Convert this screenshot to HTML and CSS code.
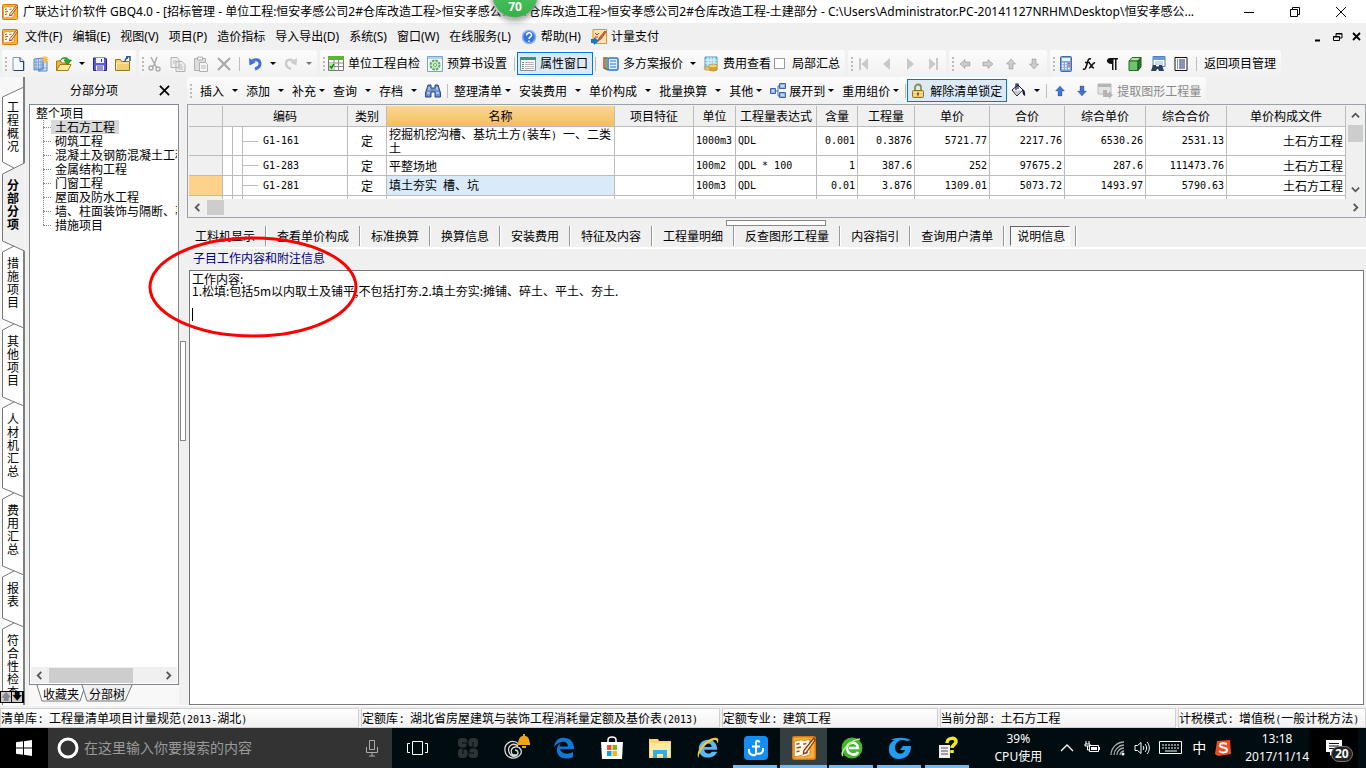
FILE: index.html
```html
<!DOCTYPE html>
<html lang="zh-CN">
<head>
<meta charset="utf-8">
<title>广联达计价软件 GBQ4.0</title>
<link rel="stylesheet" href="styles.css">
</head>
<body>
<svg class="defs" aria-hidden="true">
  <symbol id="app" viewBox="0 0 16 16"><rect x=".5" y=".5" width="15" height="15" rx="1" fill="#fbb03c" stroke="#d8780c"/><path d="M1.500 3.500l5-1 1 .7 4.500-1v10.300l-4.500 1.500-1-1-5 1z" fill="#fffdf0" stroke="#c9811c" stroke-width=".6"/><path d="M3 5.500l2-.5M3 8l3-.7M3 10.500l2-.5M7.500 5.500l2-.5M8.500 11.500l2-.5" stroke="#a8500f"/><path d="M14.500 1.500L8 9.500l-.5 2.500 2-1 6-8.500z" fill="#fff3c4" stroke="#8a2c05" stroke-width=".8"/></symbol>
  <symbol id="new" viewBox="0 0 16 16"><path d="M3 1.500h7l4 4v9H3z" fill="#f4f9ff" stroke="#8797ad"/><path d="M10 1.500v4h4M13.500 5v9.500H4" fill="none" stroke="#24436e"/></symbol>
  <symbol id="newgrid" viewBox="0 0 16 16"><path d="M1 3l9-1v11l-9 1zM10 4l4 1v10H5l5-2z" fill="#cfe0f7" stroke="#5b86c4"/><path d="M3 3v11M5.500 3v10M8 3v10M1 6h9M1 9h9M1 12h13" stroke="#6d95d1" stroke-width=".8"/><path d="M12 0v7M8.500 3.500h7M9.500 1l5 5M14.500 1l-5 5" stroke="#f3c21b" stroke-width="1.200"/></symbol>
  <symbol id="open" viewBox="0 0 16 16"><path d="M.5 14.500V5h4l1.500 2H12v7.500z" fill="#e7b93c" stroke="#ad7910"/><path d="M.5 14.500L4 8.500h11l-3 6z" fill="#ffe99a" stroke="#ad7910"/><path d="M4 5c2-5 8-4 9-1h2.500L11.500 9 8 4h2C9 2 6 2 4 5z" fill="#35a928" stroke="#167410" stroke-width=".6"/></symbol>
  <symbol id="save" viewBox="0 0 16 16"><path d="M1.500 2h12l1 1v11.500h-13z" fill="#5b5bd6" stroke="#26268c"/><path d="M4 2h8v5H4zM4 9.500h8v5H4z" fill="#f4f4ff"/><path d="M9.500 3v3M5 11h6M5 13h6" stroke="#34349a"/></symbol>
  <symbol id="folder" viewBox="0 0 16 16"><path d="M.5 14.500V3.500h5l1 2h8v9z" fill="#f2ce75" stroke="#9a7223"/><path d="M1.500 13.500V7H14" fill="none" stroke="#fff0bf"/><path d="M10 6c0-3 1-4 3-4M11 .8h4V5" fill="none" stroke="#34588e" stroke-width="1.500"/></symbol>
  <symbol id="cut" viewBox="0 0 16 16"><g fill="none" stroke="#aaa" stroke-width="1.400"><path d="M4 1l4 8 2 3M10 1L7 9l-2 2"/><circle cx="4" cy="12" r="2"/><circle cx="11" cy="13" r="2"/></g></symbol>
  <symbol id="copy" viewBox="0 0 16 16"><path d="M1 1.500h6l2 2v8H1zM6 5.500h6l3 3v7H6z" fill="#eee" stroke="#b3b3b3"/><path d="M3 5h3M3 7h2M8 9h4M8 11h5M8 13h5" stroke="#bbb"/></symbol>
  <symbol id="paste" viewBox="0 0 16 16"><path d="M1.500 2.500h11v12h-11z" fill="#ddd" stroke="#b0b0b0"/><path d="M4.500 1h5v3h-5zM6.500 6.500h6l2 2v7h-8z" fill="#f4f4f4" stroke="#b0b0b0"/><path d="M8 10h5M8 12h5" stroke="#bbb"/></symbol>
  <symbol id="del" viewBox="0 0 16 16"><path d="M2 2l12 12M14 2L2 14" stroke="#a5a5a5" stroke-width="1.800"/></symbol>
  <symbol id="undo" viewBox="0 0 16 16"><path d="M3.500 7C7 2 13 3 13 7.500c0 3-2 4.500-5 5.500" fill="none" stroke="#3f73d8" stroke-width="3"/><path d="M2 2l.5 7.500 6-3z" fill="#3f73d8"/></symbol>
  <symbol id="redo" viewBox="0 0 16 16"><path d="M12.500 7C9 2 3 3 3 7.500c0 3 2 4.500 5 5.500" fill="none" stroke="#ccc" stroke-width="2.500"/><path d="M14 2l-.5 7.500-6-3z" fill="#ccc"/></symbol>
  <symbol id="check" viewBox="0 0 16 16"><path d="M.5 1.500h15v13H.5z" fill="#fff" stroke="#777"/><path d="M0 0h16v4H0z" fill="#5cb531"/><path d="M1 7h14M1 10.500h14M6 4v10M10.500 4v10" stroke="#888"/><path d="M1 7h5v7H1z" fill="#bde9a7"/><path d="M2 10l1.500 2L6 8" fill="none" stroke="#168316" stroke-width="1.500"/></symbol>
  <symbol id="gear" viewBox="0 0 16 16"><path d="M.5.5h15v15H.5z" fill="#eef8ff" stroke="#79a5c7"/><path d="M1 1h14v2H1z" fill="#b3d2ee"/><circle cx="8" cy="9" r="4.500" fill="#cdebc5" stroke="#62a85d" stroke-width="2" stroke-dasharray="2.500 1"/><circle cx="8" cy="9" r="1.500" fill="#fff" stroke="#62a85d"/></symbol>
  <symbol id="props" viewBox="0 0 16 16"><path d="M.5 1.500h15v13H.5z" fill="#fff" stroke="#8095a0"/><path d="M0 1h16v3H0z" fill="#35967e"/><path d="M2 6.500h2M2 8.500h2M2 10.500h2M2 12.500h2" stroke="#47a18b"/><path d="M5 6.500h9M5 8.500h9M5 10.500h9M5 12.500h9" stroke="#b5b5b5"/></symbol>
  <symbol id="plans" viewBox="0 0 16 16"><path d="M3 2H1v10l2 1" fill="none" stroke="#e13a27" stroke-width="1.500"/><path d="M5 2H3v11l2 1" fill="none" stroke="#35a02c" stroke-width="1.500"/><rect x="5" y="2" width="10" height="12" rx="1.500" fill="#e4efff" stroke="#2f70d0" stroke-width="1.500"/><path d="M7 5h6M7 8h6M7 11h6" stroke="#2f70d0"/></symbol>
  <symbol id="fee" viewBox="0 0 16 16"><path d="M2 1h12v11H2z" fill="#8fd0e8" stroke="#5199b8"/><path d="M2 4h12M2 7h12M5 1v10M8 1v10M11 1v10" stroke="#e4f7fc"/><ellipse cx="10" cy="13" rx="4.500" ry="2" fill="#d4a33d" stroke="#b98a2c" stroke-width=".7"/><ellipse cx="10" cy="10" rx="4.500" ry="2" fill="#f2cf72" stroke="#b98a2c" stroke-width=".7"/><ellipse cx="4" cy="12.500" rx="3" ry="1.700" fill="#edc35b" stroke="#b98a2c" stroke-width=".6"/></symbol>
  <symbol id="first" viewBox="0 0 16 16"><path d="M3 2h2v12H3zM12 2v12L5.500 8z" fill="#c9c9c9"/></symbol>
  <symbol id="prev" viewBox="0 0 16 16"><path d="M11 2v12L4 8z" fill="#c9c9c9"/></symbol>
  <symbol id="next" viewBox="0 0 16 16"><path d="M5 2v12l7-6z" fill="#c9c9c9"/></symbol>
  <symbol id="last" viewBox="0 0 16 16"><path d="M11 2h2v12h-2zM4 2v12l6.500-6z" fill="#c9c9c9"/></symbol>
  <symbol id="arr" viewBox="0 0 16 16"><path d="M3 8l5-4.500V6h5v4H8v2.500z" fill="currentColor" stroke="#0003"/></symbol>
  <symbol id="calc" viewBox="0 0 16 16"><rect x="2.500" y=".5" width="11" height="15" rx="1" fill="#7fa4e2" stroke="#4568a6"/><path d="M4 2h8v3H4z" fill="#e6f2ff"/><path d="M4 7.500h8M4 10h8M4 12.500h8" stroke="#fff" stroke-width="1.500" stroke-dasharray="1.700 1.300"/><path d="M10 7.500h2M10 10h2" stroke="#d9543f" stroke-width="1.500"/></symbol>
  <symbol id="fx" viewBox="0 0 16 16"><path d="M2 13c2 1 3-1 4-5s1.500-6 4-5M4 6.500h5M8 7c2 0 2 5 5 5M14 7c-2-1-4 5-6 5" fill="none" stroke="#111" stroke-width="1.600"/></symbol>
  <symbol id="pilcrow" viewBox="0 0 16 16"><path d="M6 2h8v1.500h-1.500V14H11V3.500H9.500V14H8V8C1 8 2 2 6 2z" fill="#111"/></symbol>
  <symbol id="cube" viewBox="0 0 16 16"><path d="M2 5l3-3.500h9L11 5z" fill="#b3e6a5" stroke="#2a6b2c"/><path d="M2 5h9v9.500H2z" fill="#6fc46f" stroke="#2a6b2c"/><path d="M14 1.500v9.500l-3 3.500V5z" fill="#267a2c" stroke="#1f5722"/></symbol>
  <symbol id="find" viewBox="0 0 16 16"><path d="M3 .5h12v10H3z" fill="#fff" stroke="#517fc6"/><path d="M3 1h12v3H3z" fill="#6a99df"/><path d="M5 6h8M5 8h8" stroke="#93b4e2"/><path d="M3 9h3v2h3V9h3l2 6H9l-1-2H7l-1 2H1z" fill="#30415f"/></symbol>
  <symbol id="list" viewBox="0 0 16 16"><path d="M2 1.500h12v13H2z" fill="#fff" stroke="#111"/><path d="M4 4h1M4 6h1M4 8h1M4 10h1M4 12h1M6 4h6M6 6h6M6 8h6M6 10h6M6 12h6" stroke="#1a236b"/></symbol>
  <symbol id="binoc" viewBox="0 0 16 16"><path d="M3 2h3v3h4V2h3l2.500 8v4H10V9H6v5H.5v-4z" fill="#6f92cc" stroke="#28477f"/><path d="M2 10h3M11 10h3M4 4v3M12 4v3" stroke="#e3efff"/></symbol>
  <symbol id="tree" viewBox="0 0 16 16"><path d="M4 8h4M8 3v10M8 3h3M8 13h3" fill="none" stroke="#4c6da7"/><path d="M.5 5.500h5v5h-5zM9.500.5h6v5h-6zM9.500 9.500h6v5h-6z" fill="#8fb3ee" stroke="#3b65ae"/><path d="M11 3h3M11 12h3M2 8h2" stroke="#fff"/></symbol>
  <symbol id="lock" viewBox="0 0 16 16"><path d="M5 8V4.500a3 3 0 016 0V8" fill="none" stroke="#9a8652" stroke-width="1.800"/><rect x="2.500" y="7.500" width="11" height="7" rx="1" fill="#f3c75b" stroke="#99701d"/><path d="M3 9.500h10M3 12h10" stroke="#ffe7a3"/><path d="M7.200 9.500h1.600v3H7.200z" fill="#594012"/></symbol>
  <symbol id="bucket" viewBox="0 0 16 16"><path d="M2 7l6-5 5 5-6 6z" fill="#fff" stroke="#111"/><path d="M3.500 7.500h9L7 12.500z" fill="#c4cbd8"/><path d="M6 7V1h2v5M13 7c2 1 1.500 3 1.500 5-1.500-1-1.500-3-1.500-5z" fill="none" stroke="#151560" stroke-width="1.200"/></symbol>
  <symbol id="extract" viewBox="0 0 16 16"><path d="M1 1h13v10H1z" fill="#e4e4e4" stroke="#bbb"/><path d="M1 1h13v3H1zM6 7h4v3h2V8l4 4-4 4v-2H6z" fill="#b5b5b5"/></symbol>
  <symbol id="help" viewBox="0 0 16 16"><circle cx="8" cy="8" r="6.500" fill="#3476dc" stroke="#8bb2ee" stroke-width="1.500"/><path d="M5.500 6.500c0-4 5.500-3.500 5 0C10.300 8 8 8 8 10M8 11.500V13" fill="none" stroke="#fff" stroke-width="1.500"/></symbol>
  <symbol id="pay" viewBox="0 0 16 16"><path d="M2 .5h13.500v14H2z" fill="#ffe2ad" stroke="#e69321"/><path d="M4 4l2 2 2-2M4 8h3" stroke="#ca3b1a" fill="none"/><path d="M14 2L8 9l-1 3 3-2 5-7z" fill="#e35e39" stroke="#8c210b" stroke-width=".6"/><path d="M0 10h3V8l5 4-5 4v-2H0z" fill="#1579c0"/></symbol>
  <symbol id="chev" viewBox="0 0 10 10"><path d="M7 1L3 5l4 4" fill="none" stroke="#555" stroke-width="2"/></symbol>
</svg>

<header class="titlebar">
  <svg class="ic"><use href="#app"/></svg>
  <h1>广联达计价软件 GBQ4.0 - [招标管理 - 单位工程:恒安孝感公司2#仓库改造工程&gt;恒安孝感公司2#仓库改造工程&gt;恒安孝感公司2#仓库改造工程-土建部分 - C:\Users\Administrator.PC-20141127NRHM\Desktop\恒安孝感公...</h1>
  <div class="winbtns">
    <button aria-label="最小化"><svg viewBox="0 0 12 12"><path d="M1 6.500h10" stroke="#000"/></svg></button>
    <button aria-label="还原"><svg viewBox="0 0 12 12"><path d="M1.500 3.500h7v7h-7zM3.500 3.500v-2h7v7h-2" fill="none" stroke="#000"/></svg></button>
    <button aria-label="关闭"><svg viewBox="0 0 12 12"><path d="M1 1l10 10M11 1L1 11" stroke="#000"/></svg></button>
  </div>
</header>
<div class="ball">70</div>

<nav class="menubar">
  <svg class="ic"><use href="#app"/></svg>
  <button>文件(F)</button><button>编辑(E)</button><button>视图(V)</button><button>项目(P)</button><button>造价指标</button><button>导入导出(D)</button><button>系统(S)</button><button>窗口(W)</button><button>在线服务(L)</button>
  <button><svg class="ic"><use href="#help"/></svg>帮助(H)</button><button><svg class="ic"><use href="#pay"/></svg>计量支付</button>
  <div class="mdibtns">
    <button aria-label="最小化子窗口"><svg viewBox="0 0 10 10"><path d="M1 8.500h5" stroke="#000" stroke-width="2"/></svg></button>
    <button aria-label="还原子窗口"><svg viewBox="0 0 10 10"><path d="M.5 4.500h6v4h-6zM3 4V1.500h6V6H7M3 2h6M0 5h7" fill="none" stroke="#000"/></svg></button>
    <button aria-label="关闭子窗口"><svg viewBox="0 0 10 10"><path d="M1 1l7 7M8 1L1 8" stroke="#000" stroke-width="1.800"/></svg></button>
  </div>
</nav>

<div class="toolbar">
  <div class="group"><i class="grip"></i>
    <button aria-label="新建"><svg class="ic"><use href="#new"/></svg></button><button aria-label="新建工程"><svg class="ic"><use href="#newgrid"/></svg></button><button aria-label="打开"><svg class="ic"><use href="#open"/></svg></button><i class="dd"></i><button aria-label="保存"><svg class="ic"><use href="#save"/></svg></button><button aria-label="文件夹"><svg class="ic"><use href="#folder"/></svg></button>
  </div>
  <div class="group"><i class="grip"></i>
    <button aria-label="剪切"><svg class="ic"><use href="#cut"/></svg></button><button aria-label="复制"><svg class="ic"><use href="#copy"/></svg></button><button aria-label="粘贴"><svg class="ic"><use href="#paste"/></svg></button><button aria-label="删除"><svg class="ic"><use href="#del"/></svg></button><i class="sep"></i><button aria-label="撤销"><svg class="ic"><use href="#undo"/></svg></button><i class="dd"></i><button aria-label="重做"><svg class="ic"><use href="#redo"/></svg></button><i class="dd dim"></i>
  </div>
  <div class="group"><i class="grip"></i>
    <button><svg class="ic"><use href="#check"/></svg>单位工程自检</button><button><svg class="ic"><use href="#gear"/></svg>预算书设置</button><i class="sep"></i><button class="pressed"><svg class="ic"><use href="#props"/></svg>属性窗口</button><i class="sep"></i><button><svg class="ic"><use href="#plans"/></svg>多方案报价</button><i class="dd"></i><button><svg class="ic"><use href="#fee"/></svg>费用查看</button><label class="tick"><input type="checkbox">局部汇总</label>
  </div>
  <div class="group"><i class="grip"></i>
    <button aria-label="第一条"><svg class="ic"><use href="#first"/></svg></button><button aria-label="上一条"><svg class="ic"><use href="#prev"/></svg></button><button aria-label="下一条"><svg class="ic"><use href="#next"/></svg></button><button aria-label="最后一条"><svg class="ic"><use href="#last"/></svg></button>
  </div>
  <div class="group dim-arrows"><i class="grip"></i>
    <button aria-label="左移"><svg class="ic"><use href="#arr"/></svg></button><button aria-label="右移"><svg class="ic right"><use href="#arr"/></svg></button><button aria-label="上移"><svg class="ic up"><use href="#arr"/></svg></button><button aria-label="下移"><svg class="ic down"><use href="#arr"/></svg></button>
  </div>
  <div class="group"><i class="grip"></i>
    <button aria-label="计算器"><svg class="ic"><use href="#calc"/></svg></button><button aria-label="函数"><svg class="ic"><use href="#fx"/></svg></button><button aria-label="段落"><svg class="ic"><use href="#pilcrow"/></svg></button><button aria-label="图元"><svg class="ic"><use href="#cube"/></svg></button><button aria-label="查找"><svg class="ic"><use href="#find"/></svg></button><button aria-label="列表"><svg class="ic"><use href="#list"/></svg></button><i class="sep"></i><button>返回项目管理</button>
  </div>
</div>

<main class="work">
  <nav class="rail">
    <svg class="rail-art" viewBox="0 0 25 628" aria-hidden="true">
      <path d="M24.500 0V86L2.500 97V164L24.500 174V628H2.500V20L24.500 9z" fill="#fff"/>
      <path d="M24.500 86L2.500 97V164L24.500 174z" fill="#f0f0f0"/>
      <g fill="none" stroke="#777"><path d="M24 10L2.500 20V85L14 91M24.500 86L2.500 97V164L24.500 174M14 169L2.500 175V242L24 251M14 247L2.500 253V320L24 329M14 325L2.500 331V411L24 420M14 416L2.500 422V489L24 498M14 494L2.500 500V541L24 550M14 546L2.500 552V628"/></g>
      <path d="M24 0V86M24 174V628" stroke="#808080" stroke-width="2"/>
    </svg>
    <button>工程概况</button><button class="on">分部分项</button><button>措施项目</button><button>其他项目</button><button>人材机汇总</button><button>费用汇总</button><button>报表</button><button>符合性检查</button>
    <div class="rail-scroll"><button class="off" aria-label="向上">🡅</button><button aria-label="向下">🡇</button></div>
  </nav>

  <aside class="sidebar">
    <div class="side-head"><h2>分部分项</h2><button aria-label="关闭面板"><svg viewBox="0 0 12 12"><path d="M1 1l10 10M11 1L1 11" stroke="#000" stroke-width="2"/></svg></button></div>
    <div class="treebox">
      <div class="treeview">
        <div class="root">整个项目</div>
        <ul><li><span class="sel">土石方工程</span></li><li>砌筑工程</li><li>混凝土及钢筋混凝土工程</li><li>金属结构工程</li><li>门窗工程</li><li>屋面及防水工程</li><li>墙、柱面装饰与隔断、幕墙</li><li>措施项目</li></ul>
      </div>
      <div class="hbar"><svg><use href="#chev"/></svg><i class="thumb wide"></i><svg class="flip"><use href="#chev"/></svg></div>
    </div>
    <div class="foot-tabs"><svg viewBox="0 0 150 20" aria-hidden="true"><path d="M8 0l5 16h38l4-12" fill="#fff" stroke="#777"/><path d="M53 0l5 16h38l7-16" fill="#f0f0f0" stroke="#777"/></svg><button>收藏夹</button><button>分部树</button></div>
  </aside>

  <div class="splitter"><i></i></div>

  <section class="content">
    <div class="toolbar inner">
      <div class="group second"><i class="grip"></i>
        <button class="m">插入<i class="dd"></i></button><button class="m">添加<i class="dd"></i></button><button class="m tight">补充<i class="dd"></i></button><button class="m">查询<i class="dd"></i></button><button class="m">存档<i class="dd"></i></button><button class="m" aria-label="查找"><svg class="ic"><use href="#binoc"/></svg></button><i class="sep"></i>
        <button class="m tight">整理清单<i class="dd"></i></button><button class="m">安装费用<i class="dd"></i></button><button class="m">单价构成<i class="dd"></i></button><button class="m">批量换算<i class="dd"></i></button><button class="m tight">其他<i class="dd"></i></button><button class="m tight"><svg class="ic"><use href="#tree"/></svg>展开到<i class="dd"></i></button><button class="m tight">重用组价<i class="dd"></i></button><i class="sep"></i>
        <button class="pressed"><svg class="ic"><use href="#lock"/></svg>解除清单锁定</button><button class="m"><svg class="ic"><use href="#bucket"/></svg><i class="dd"></i></button><i class="sep"></i>
        <button class="m blue" aria-label="上移"><svg class="ic up"><use href="#arr"/></svg></button><button class="m blue" aria-label="下移"><svg class="ic down"><use href="#arr"/></svg></button><button class="disabled" disabled><svg class="ic"><use href="#extract"/></svg>提取图形工程量</button>
      </div>
    </div>

    <div class="gridbox">
      <div class="gridview">
        <table>
          <colgroup><col class="c34"><col class="c125"><col class="c39"><col class="c228"><col class="c79"><col class="c42"><col class="c81"><col class="c41"><col class="c57"><col class="c75"><col class="c75"><col class="c81"><col class="c81"><col class="c119"></colgroup>
          <thead><tr><th></th><th>编码</th><th>类别</th><th class="cur">名称</th><th>项目特征</th><th>单位</th><th>工程量表达式</th><th>含量</th><th>工程量</th><th>单价</th><th>合价</th><th>综合单价</th><th>综合合价</th><th>单价构成文件</th></tr></thead>
          <tbody>
            <tr class="tall"><td class="rh"></td><td class="code">G1-161</td><td class="mid">定</td><td>挖掘机挖沟槽、基坑土方<span class="n">(</span>装车<span class="n">) </span>一、二类土</td><td></td><td class="n">1000m3</td><td class="n">QDL</td><td class="n r">0.001</td><td class="n r">0.3876</td><td class="n r">5721.77</td><td class="n r">2217.76</td><td class="n r">6530.26</td><td class="n r">2531.13</td><td class="r">土石方工程</td></tr>
            <tr><td class="rh"></td><td class="code">G1-283</td><td class="mid">定</td><td>平整场地</td><td></td><td class="n">100m2</td><td class="n">QDL * 100</td><td class="n r">1</td><td class="n r">387.6</td><td class="n r">252</td><td class="n r">97675.2</td><td class="n r">287.6</td><td class="n r">111473.76</td><td class="r">土石方工程</td></tr>
            <tr><td class="rh on"></td><td class="code">G1-281</td><td class="mid">定</td><td class="picked">填土夯实<span class="n"> </span>槽、坑</td><td></td><td class="n">100m3</td><td class="n">QDL</td><td class="n r">0.01</td><td class="n r">3.876</td><td class="n r">1309.01</td><td class="n r">5073.72</td><td class="n r">1493.97</td><td class="n r">5790.63</td><td class="r">土石方工程</td></tr>
            <tr><td class="rh"></td><td class="code last"></td><td></td><td></td><td></td><td></td><td></td><td></td><td></td><td></td><td></td><td></td><td></td><td></td></tr>
          </tbody>
        </table>
      </div>
      <div class="vbar"><svg class="vup"><use href="#chev"/></svg><i class="vthumb"></i><svg class="vdown"><use href="#chev"/></svg></div>
      <div class="hbar"><svg><use href="#chev"/></svg><i class="thumb"></i><svg class="flip"><use href="#chev"/></svg></div>
    </div>

    <div class="tabs"><i class="handle"></i>
      <button>工料机显示</button><button>查看单价构成</button><button>标准换算</button><button>换算信息</button><button>安装费用</button><button>特征及内容</button><button>工程量明细</button><button>反查图形工程量</button><button>内容指引</button><button>查询用户清单</button><button class="on"><span>说明信息</span></button>
    </div>
    <div class="info">
      <label for="note">子目工作内容和附注信息</label>
      <textarea id="note" spellcheck="false">工作内容:
1.松填:包括5m以内取土及铺平,不包括打夯.2.填土夯实:摊铺、碎土、平土、夯土.
</textarea>
      <i class="caret"></i>
      <svg class="ring" viewBox="0 0 212 104" aria-hidden="true"><ellipse cx="106" cy="52" rx="103" ry="49" fill="none" stroke="#fe0000" stroke-width="3"/></svg>
    </div>
  </section>
</main>

<footer class="status">
  <span>清单库<b>:</b>工程量清单项目计量规范<i>(2013-</i>湖北<i>)</i></span><span>定额库<b>:</b>湖北省房屋建筑与装饰工程消耗量定额及基价表<i>(2013)</i></span><span>定额专业<b>:</b>建筑工程</span><span>当前分部<b>:</b>土石方工程</span><span>计税模式<b>:</b>增值税<i>(</i>一般计税方法<i>)</i></span>
</footer>

<div class="taskbar">
  <button class="start" aria-label="开始"><svg viewBox="0 0 16 16"><path d="M0 2.300L7 1.300V7.500H0zM8 1.200L16 0v7.500H8zM0 8.500h7v6.200L0 13.700zM8 8.500h8V16l-8-1.200z" fill="#fff"/></svg></button>
  <div class="search"><svg class="ring-ic" viewBox="0 0 22 22"><circle cx="11" cy="11" r="9" fill="none" stroke="#fff" stroke-width="3"/></svg><input type="text" placeholder="在这里输入你要搜索的内容" aria-label="搜索"><svg class="mic" viewBox="0 0 14 18"><path d="M4.500 1.500h5v9h-5zM1.500 8v5.500h11V8M7 13.500V17M4 17h6" fill="none" stroke="#aaa"/></svg></div>
  <div class="apps">
    <button class="view" aria-label="任务视图"><svg viewBox="0 0 24 24"><path d="M7.500 5.500h10v13h-10zM5 7.500H2.500v9H5M20 7.500h2.500v9H20" fill="none" stroke="#fff"/></svg></button>
    <button aria-label="风扇"><svg viewBox="0 0 24 24"><g fill="#2d3336"><rect x="2" y="2" width="9.500" height="9.500" rx="4"/><rect x="12.500" y="2" width="9.500" height="9.500" rx="4"/><rect x="2" y="12.500" width="9.500" height="9.500" rx="4"/><rect x="12.500" y="12.500" width="9.500" height="9.500" rx="4"/></g><path d="M6 7h5v4M17 6v5h-4M18 17h-5v-4M7 18v-5h4" fill="none" stroke="#000c0f"/></svg></button>
    <button aria-label="提醒"><svg class="big" viewBox="0 0 28 28"><path d="M17 10C9 4 2 10 3 17s9 9 14 5 1-10-4-9-5 8 0 8 3-5 0-5M16 12c-5-4-11 0-9 6s8 5 9 1" fill="none" stroke="#ddd" stroke-width="1.300"/><path d="M15 11c2-2 1-9 6-9V0h2v2c5 0 4 7 6 9zM20 12h4v2h-4z" fill="#eda616"/></svg></button>
    <button aria-label="Edge"><svg viewBox="0 0 24 24"><path d="M2 11C3 4 8 1 13 2c6 0 9 5 9 11H8c1 5 8 6 13 3v5C12 25 4 21 5 13c0-3 2-5 4-6-1 1-1.500 2-1.500 3.500H16C16 4 7 4 2 11z" fill="#1179d5"/></svg></button>
    <button aria-label="应用商店"><svg viewBox="0 0 24 24"><path d="M8 7V4c0-4 8-4 8 0v3" fill="none" stroke="#fff" stroke-width="1.500"/><path d="M1 6h22l-1 17H2z" fill="#fff"/><path d="M7 9h4.500v5H7z" fill="#f25022"/><path d="M12.500 9H17v5h-4.500z" fill="#7fba00"/><path d="M7 15h4.500v5H7z" fill="#00a4ef"/><path d="M12.500 15H17v5h-4.500z" fill="#ffb900"/></svg></button>
    <button aria-label="文件资源管理器"><svg viewBox="0 0 24 24"><path d="M1 3h9l1 2h12v17H1z" fill="#ffd76d"/><path d="M2 7h20v13H2z" fill="#ffe9a1"/><path d="M5 22v-8h14v8h-4v-4H9v4z" fill="#2eaee6"/></svg></button>
    <button aria-label="Internet Explorer"><svg viewBox="0 0 26 26"><path d="M13 4c6 0 10 4 10 11H9c0 5 7 5 8 2h6C20 26 3 26 3 14 3 8 7 4 13 4zM9 12h8c0-5-8-5-8 0z" fill="#55b9f4"/><path d="M3 24C-2 19 9 3 20 2c5-1 5 3 3 6 0-4-2-5-7-2C8 10 2 20 3 24z" fill="#f5c736"/></svg></button>
    <button class="run" aria-label="云助手"><svg viewBox="0 0 24 24"><rect width="24" height="24" rx="4" fill="#148ef5"/><path d="M15.500 6.500C15 4 12 4 12 7v10.500c0 3-7 2-7-2.500M12 17c3 2 7 0 7-3M8 10.500h8M5 13v3M19 12v3" fill="none" stroke="#fff" stroke-width="2"/></svg></button>
    <button class="run now" aria-label="计价软件"><svg><use href="#app"/></svg></button>
    <button class="run" aria-label="浏览器"><svg viewBox="0 0 24 24"><circle cx="12" cy="12" r="10.500" fill="#42b72f"/><path d="M18 16c-3 5-11 2-11-4s10-8 11 0H9" fill="none" stroke="#fff" stroke-width="2.500"/><path d="M3 20C-1 15 13 3 20 3" fill="none" stroke="#b9ec91" stroke-width="1.500"/></svg></button>
    <button class="run" aria-label="广联达"><svg viewBox="0 0 24 24"><path d="M3 4c5-3 13-3 20 0l-4 1c-6-3-12 1-12 7s8 8 10 2h-5l3-4h8c0 8-5 13-12 13S0 18 1 12c0-4 3-7 6-8z" fill="#1f9df3"/></svg></button>
    <button class="run" aria-label="帮助"><svg viewBox="0 0 24 24"><path d="M3 9h11v13H3z" fill="#eee"/><path d="M5 12h7M5 15h7M5 18h7" stroke="#555"/><path d="M11 7c0-6 10-6 9-1-1 3-4 3-4 6M16 14v3" fill="none" stroke="#f4ea16" stroke-width="3.500"/></svg></button>
  </div>
  <div class="cpu"><span>39%</span><span>CPU使用</span></div>
  <div class="tray">
    <svg viewBox="0 0 16 16"><path d="M2 11l6-6 6 6" fill="none" stroke="#fff" stroke-width="1.300"/></svg>
    <svg viewBox="0 0 16 16"><path d="M5.500 5.500h9v6h-9zM15.500 7v3M2 1v3M5 1v3M1 4h5v2H1zM3.500 6v4H5" fill="none" stroke="#fff"/><path d="M7 7h6v3H7z" fill="#fff"/></svg>
    <svg viewBox="0 0 16 16"><g fill="none" stroke="#aaa" stroke-width="1.300"><path d="M2 15C2 8 8 2 15 2M5 15C5 10 10 5 15 5M8 15c0-4 3-7 7-7M11 15c0-2 2-4 4-4"/></g><circle cx="14" cy="14" r="1.500" fill="#fff"/></svg>
    <svg viewBox="0 0 16 16"><path d="M1 5.500h2.500L7 2.500v11l-3.500-3H1zM9 6c1 1 1 3 0 4M11 4c2 2 2 6 0 8M13 2c3 3 3 9 0 12" fill="none" stroke="#fff"/></svg>
    <svg class="kb" viewBox="0 0 24 14"><path d="M.5.500h22v12H.5z" fill="none" stroke="#fff"/><path d="M3 4h18M3 7h18" stroke="#fff" stroke-dasharray="2 1"/><path d="M6 10h12" stroke="#fff"/></svg>
    <span class="ime">中</span>
    <svg viewBox="0 0 16 16"><path d="M2 1l13-1 1 14-13 2-3-2z" fill="#f04b20"/><path d="M12 4C7 2 4 4 5 6s7 1 7 4-5 3-8 1" fill="none" stroke="#fff" stroke-width="2"/></svg>
  </div>
  <div class="clock"><span>13:18</span><span>2017/11/14</span></div>
  <button class="notice" aria-label="通知"><svg viewBox="0 0 16 16"><path d="M0 0h16v12H8l-4 4v-4H0z" fill="#fff"/><path d="M3 3.500h10M3 6h10M3 8.500h7" stroke="#111"/></svg><span class="count">20</span></button>
</div>
</body>
</html>
```

FILE: styles.css
```css
* { box-sizing: border-box; }
html, body { height: 100%; margin: 0; }
body {
  display: flex; flex-direction: column; overflow: hidden;
  background: #f0f0f0; color: #000;
  font: 12px/16px "Noto Sans", "Noto Sans CJK SC", sans-serif;
}
button, input, textarea { font: inherit; color: inherit; }
button { display: flex; align-items: center; justify-content: center; border: 0; padding: 0; background: none; white-space: nowrap; }
h1, h2 { margin: 0; font-size: 12px; font-weight: 400; }
i { font-style: normal; }
.defs { position: absolute; width: 0; height: 0; }
.ic { width: 16px; height: 16px; flex: none; }

/* Title and menu */
.titlebar { display: flex; align-items: center; gap: 5px; height: 23px; padding-left: 2px; background: #fff; flex: none; }
.titlebar h1 { white-space: nowrap; flex: 1; min-width: 0; }
.winbtns { display: flex; margin-right: 2px; }
.winbtns button { width: 46px; height: 23px; }
.winbtns svg { width: 12px; height: 12px; }
.ball {
  position: absolute; left: 492px; top: -28px; width: 46px; height: 46px; border-radius: 50%;
  background: linear-gradient(#5dd06a, #37b04b); border: 1px solid #8ea791; box-shadow: 0 3px 6px #0006;
  color: #fff; font-weight: 700; text-align: center; padding-top: 26px;
}
.menubar { display: flex; align-items: center; gap: 10px; height: 27px; padding-left: 2px; flex: none; }
.menubar > .ic { margin-right: -3px; }
.menubar button { gap: 4px; }
.mdibtns { display: flex; gap: 9px; margin-left: auto; padding-right: 4px; }
.mdibtns svg { width: 10px; height: 10px; }

/* Toolbars */
.toolbar { display: flex; gap: 3px; height: 27px; padding: 0 2px; flex: none; }
.toolbar.inner { padding: 0; }
.group {
  display: flex; align-items: center; gap: 7px; height: 27px; padding: 0 5px 0 3px; border-radius: 3px;
  background: linear-gradient(#fcfcfc, #f1f1f1);
}
.group button { gap: 4px; height: 23px; }
.grip { width: 2px; height: 14px; margin-right: -4px; background: repeating-linear-gradient(#bbb 0 2px, transparent 2px 4px); }
.sep { width: 1px; height: 14px; background: #bdbdbd; }
.dd { width: 0; height: 0; border: 3px solid transparent; border-top-color: #000; border-bottom: 0; flex: none; }
.dim { border-top-color: #777; }
.group .pressed { border: 1px solid #0078d7; background: #dbeaf6; padding: 0 4px 0 2px; margin: 0 -5px; }
.tick { display: flex; align-items: center; gap: 7px; margin-left: -4px; }
.tick input { appearance: none; width: 11px; height: 11px; margin: 0; border: 1px solid #999; background: #fff; }
.dim-arrows { color: #ccc; }
.blue { color: #3d75dc; }
.right { transform: rotate(180deg); }
.up { transform: rotate(90deg); }
.down { transform: rotate(-90deg); }
.second { gap: 8px; }
.second .grip { margin-right: 0; }
.second .sep { margin: 0 -2px; }
.group .m { gap: 8px; }
.group .tight { gap: 3px; }
.group .blue { margin: 0 -1px; }
.disabled { color: #888; }

/* Work area */
.work { display: flex; flex: 1; min-height: 0; }
.rail { position: relative; display: flex; flex-direction: column; width: 25px; padding-top: 11px; overflow: hidden; background: #f7f7f7; flex: none; }
.rail-art { position: absolute; left: 0; top: 0; width: 25px; height: 628px; }
.rail > button { position: relative; padding: 13px 5px 13px 7px; white-space: normal; line-height: 13px; flex: none; text-align: left; }
.rail .on { font-weight: 700; }
.rail-scroll { position: absolute; left: 0; bottom: 2px; display: flex; width: 24px; background: #ccc; border: 1px solid #000; }
.rail-scroll button { flex: 1; height: 10px; font: 10px/10px "DejaVu Sans", sans-serif; border-right: 1px solid #000; }
.rail-scroll .off { color: #888; }
.sidebar { display: flex; flex-direction: column; width: 150px; margin-left: 4px; flex: none; }
.side-head { display: flex; align-items: center; height: 27px; padding-right: 9px; }
.side-head h2 { flex: 1; text-align: center; }
.side-head svg { width: 11px; height: 11px; }
.treebox { display: flex; flex-direction: column; flex: 1; min-height: 0; border: 1px solid #828790; background: #fff; padding: 1px; font-family: "Noto Sans CJK SC", sans-serif; }
.treeview { flex: 1; min-height: 0; overflow: hidden; padding: 0 0 0 5px; line-height: 14px; white-space: nowrap; }
.treeview ul { list-style: none; margin: 0 0 0 7px; padding: 0; }
.treeview li { position: relative; height: 14px; padding-left: 12px; }
.treeview li::before { content: ""; position: absolute; left: 0; top: 7px; width: 8px; border-top: 1px dotted #888; }
.treeview li::after { content: ""; position: absolute; left: 0; top: -7px; height: 14px; border-left: 1px dotted #888; }
.sel { display: inline-block; height: 14px; margin-left: -4px; padding: 0 4px; background: #d9d9d9; }
.hbar { display: flex; align-items: center; height: 16px; padding: 0 4px; background: #f0f0f0; grid-column: 1 / -1; flex: none; }
.hbar svg, .vbar svg { width: 9px; height: 9px; }
.thumb { width: 17px; height: 15px; margin-left: 5px; background: #cdcdcd; }
.thumb.wide { width: 84px; }
.flip { margin-left: auto; transform: scaleX(-1); }
.foot-tabs { position: relative; display: flex; height: 20px; padding-left: 14px; gap: 10px; background: #f8f8f8; flex: none; }
.foot-tabs svg { position: absolute; left: 0; top: 0; width: 150px; height: 20px; }
.foot-tabs button { position: relative; height: 18px; font-family: "Noto Sans CJK SC", sans-serif; }
.splitter { display: flex; align-items: center; justify-content: center; width: 8px; flex: none; }
.splitter i { width: 6px; height: 100px; border: 1px solid #888; background: #fff; }

.content { display: flex; flex-direction: column; flex: 1; min-width: 0; font-family: "Noto Sans CJK SC", sans-serif; }
.gridbox { display: grid; grid-template-columns: 1fr 18px; grid-template-rows: 93px 17px; border: 1px solid #a0a0a8; padding: 1px; flex: none; }
.gridview { overflow: hidden; background: #fff; }
table { width: 100%; table-layout: fixed; border-collapse: separate; border-spacing: 0; line-height: 12px; }
th, td { height: 20px; padding: 0 2px; border: solid #bcbcbc; border-width: 0 1px 1px 0; text-align: left; }
th { height: 21px; padding: 0; background: #f0f0f0; font-weight: 400; text-align: center; white-space: nowrap; }
.cur { background: linear-gradient(#fbd793, #f3bf5d); }
.tall td { height: 29px; }
.rh { background: #f0f0f0; }
.rh.on { background: #ffd28c; }
.picked { background: #d9eaf9; }
.n { font-family: "DejaVu Sans Mono", monospace; font-size: 10px; white-space: pre; }
.r { text-align: right; }
.mid { text-align: center; }
.code {
  padding-left: 40px; font: 10px/12px "DejaVu Sans Mono", monospace;
  background: linear-gradient(#bcbcbc, #bcbcbc) 9px 0 / 1px 100% no-repeat,
    linear-gradient(#bcbcbc, #bcbcbc) 19px 0 / 1px 100% no-repeat,
    linear-gradient(#bcbcbc, #bcbcbc) 19px 50% / 16px 1px no-repeat;
}
.code.last { background-size: 1px 100%, 1px 100%, 0 0; }
.c34 { width: 34px; } .c125 { width: 125px; } .c39 { width: 39px; } .c228 { width: 228px; } .c79 { width: 79px; }
.c42 { width: 42px; } .c81 { width: 81px; } .c41 { width: 41px; } .c57 { width: 57px; } .c75 { width: 75px; } .c119 { width: 119px; }
.vbar { display: flex; flex-direction: column; align-items: center; padding: 5px 0; background: #f0f0f0; }
.vup { transform: rotate(90deg); }
.vdown { transform: rotate(-90deg); margin-top: auto; }
.vthumb { width: 15px; height: 17px; margin-top: 5px; background: #cdcdcd; }

.tabs { position: relative; display: flex; align-items: center; height: 31px; padding: 6px 0 0; border-bottom: 2px solid #fff; flex: none; }
.tabs button { height: 20px; padding: 0 10px; border-right: 1px solid #999; box-shadow: 1px 0 #fff; }
.tabs > button { margin-right: 1px; }
.tabs > button:first-of-type { padding-left: 8px; }
.tabs .on { padding: 0 5px; }
.tabs .on span { padding: 1px 4px 1px 6px; border: 1px solid; border-color: #666 #fff #fff #666; background: #f8f8f8; }
.handle { position: absolute; left: 539px; top: 2px; width: 100px; height: 6px; border: 1px solid #888; background: #fff; }
.info { position: relative; display: flex; flex-direction: column; flex: 1; min-height: 0; padding: 0 2px; }
.info label { height: 21px; padding-left: 4px; line-height: 18px; color: #000080; }
.info textarea {
  flex: 1; min-height: 0; margin: 0; resize: none; outline: none; border: 1px solid #777; border-radius: 0;
  padding: 2px; background: #fff; line-height: 12px;
}
.caret { position: absolute; left: 5px; top: 59px; width: 1px; height: 13px; background: #000; }
.ring { position: absolute; left: -40px; top: -14px; width: 212px; height: 104px; pointer-events: none; }

/* Status bar */
.status { display: grid; grid-template-columns: 361fr 361fr 217fr 238fr 189fr; gap: 2px; height: 23px; padding-top: 2px; border-top: 1px solid #fff; font-family: "Noto Sans CJK SC", sans-serif; flex: none; }
.status span { border: 1px solid #d0d0d0; background: linear-gradient(#fff, #f1f1f1); line-height: 18px; white-space: nowrap; overflow: hidden; }
.status b { display: inline-block; width: 12px; font-weight: 400; padding-left: 2px; }
.status i { font: 10px "DejaVu Sans Mono", monospace; }

/* Taskbar */
.taskbar { display: flex; height: 40px; background: #000c0f; color: #fff; flex: none; }
.start { width: 48px; background: #000; }
.start svg { width: 16px; height: 16px; }
.search { display: flex; align-items: center; width: 344px; padding: 0 13px 0 9px; background: #333; }
.ring-ic { width: 22px; height: 22px; flex: none; }
.search input { flex: 1; min-width: 0; border: 0; outline: 0; padding: 0 0 0 5px; background: none; font-size: 14px; line-height: 20px; }
.search input::placeholder { color: #9a9a9a; }
.mic { width: 14px; height: 18px; }
.apps { display: flex; gap: 1px; padding-left: 1px; }
.apps button { width: 47px; border-bottom: 3px solid transparent; padding-top: 3px; }
.apps .view { margin-right: 3px; }
.apps svg { width: 24px; height: 24px; }
.apps .big { width: 28px; height: 28px; }
.apps .run { border-image: linear-gradient(90deg, transparent 4px, #76b9ed 4px 42px, transparent 42px) 3; border-width: 0 0 3px; border-style: solid; }
.apps .now { background: #353f42; border-image: none; border-color: #76b9ed; }
.cpu, .clock { display: flex; flex-direction: column; align-items: center; justify-content: center; line-height: 18px; }
.cpu { margin-left: auto; }
.tray { display: flex; align-items: center; gap: 9px; padding: 0 14px 0 17px; }
.tray svg { width: 16px; height: 16px; }
.tray .kb { width: 24px; height: 14px; }
.ime { font-size: 14px; }
.notice { position: relative; width: 48px; margin-left: 1px; margin-right: 8px; background: #000; }
.notice svg { width: 16px; height: 16px; }
.count { position: absolute; left: 21px; top: 18px; padding: 0 3px; border-radius: 8px; border: 1px solid #777; background: #222; font-weight: 700; line-height: 14px; }
```
